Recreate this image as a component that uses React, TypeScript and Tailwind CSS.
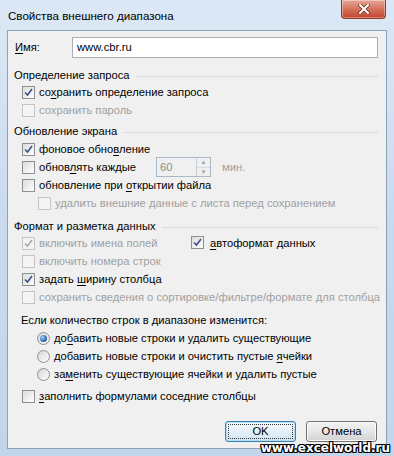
import type { ReactNode } from "react";

function Check({ checked = false, disabled = false }: { checked?: boolean; disabled?: boolean }) {
  return (
    <span
      className={`relative flex h-[13px] w-[13px] shrink-0 items-center justify-center border ${
        disabled ? "border-[#c4c4c4] bg-[#f4f4f4]" : "border-[#8e8f8f] bg-gradient-to-br from-[#dcdcdc] to-[#ffffff]"
      }`}
    >
      {checked && (
        <svg width="9" height="9" viewBox="0 0 9 9">
          <path
            d="M1 4.5 L3.5 7 L8 1"
            fill="none"
            stroke={disabled ? "#a8a8a8" : "#3c4f8a"}
            strokeWidth="1.6"
          />
        </svg>
      )}
    </span>
  );
}

function Radio({ checked = false }: { checked?: boolean }) {
  return (
    <span className="flex h-[13px] w-[13px] shrink-0 items-center justify-center rounded-full border border-[#8e8f8f] bg-gradient-to-br from-[#d8d8d8] to-[#fcfcfc]">
      {checked && (
        <span className="h-[7px] w-[7px] rounded-full bg-[radial-gradient(circle_at_35%_35%,#a6d3f5,#2a6cb0_60%,#1a4e86)]" />
      )}
    </span>
  );
}

function Row({
  children,
  checked,
  disabled,
  indent = "pl-[14px]",
}: {
  children: ReactNode;
  checked?: boolean;
  disabled?: boolean;
  indent?: string;
}) {
  return (
    <div className={`flex h-[18px] items-center gap-[3px] whitespace-nowrap ${indent}`}>
      <Check checked={checked} disabled={disabled} />
      <span className={`pl-[1px] ${disabled ? "text-[#a0a0a0]" : "text-black"}`}>{children}</span>
    </div>
  );
}

function Header({ children, mt }: { children: ReactNode; mt: string }) {
  return (
    <div className={`flex h-[16px] items-center gap-[6px] whitespace-nowrap pl-[6px] pr-[8px] ${mt}`}>
      <span className="shrink-0">{children}</span>
      <span className="mt-[3px] h-px flex-1 bg-[#dcdcdc]" />
    </div>
  );
}

function Option({ children, checked }: { children: ReactNode; checked?: boolean }) {
  return (
    <div className="flex h-[18px] items-center gap-[4px] whitespace-nowrap pl-[29px]">
      <Radio checked={checked} />
      <span>{children}</span>
    </div>
  );
}

export default function App() {
  return (
    <div
      className="relative flex h-[456px] w-[394px] flex-col overflow-hidden bg-gradient-to-b from-[#dce8f5] via-[#c9daee] to-[#c3d5ea] text-[11.2px] text-black"
      style={{ fontFamily: '"Liberation Sans", Arial, sans-serif' }}
    >
      <div className="flex h-[30px] shrink-0 items-start justify-between pl-[8px] pr-[8px]">
        <span className="mt-[7px] text-[11.6px] text-black">Свойства внешнего диапазона</span>
        <button className="flex h-[19px] w-[45px] items-center justify-center rounded-b-[4px] border border-t-0 border-[#8a3b2b] bg-gradient-to-b from-[#e8a697] via-[#d4735d] to-[#c2402a] shadow-[inset_0_0_0_1px_rgba(255,255,255,0.35)]">
          <svg width="12" height="10" viewBox="0 0 12 10">
            <path d="M2 1 L10 9 M10 1 L2 9" stroke="#6b2a1e" strokeWidth="3.4" strokeLinecap="square" />
            <path d="M2 1 L10 9 M10 1 L2 9" stroke="#ffffff" strokeWidth="2" strokeLinecap="square" />
          </svg>
        </button>
      </div>

      <div className="mx-[7px] mb-[7px] flex flex-1 flex-col border border-[#8ca1bb] bg-[#f0f0f0] pt-[6px]">
        <div className="flex h-[21px] items-center pl-[7px] pr-[8px]">
          <span className="w-[57px]">
            <span className="underline underline-offset-2">И</span>мя:
          </span>
          <div className="flex h-[21px] flex-1 items-center border border-[#abadb3] bg-white pl-[4px]">
            www.cbr.ru
          </div>
        </div>

        <Header mt="mt-[9px]">Определение запроса</Header>
        <Row checked>
          со<span className="underline underline-offset-2">х</span>ранить определение запроса
        </Row>
        <Row disabled>сохранить пароль</Row>

        <Header mt="mt-[4px]">Обновление экрана</Header>
        <div className="mt-px" />
        <Row checked>
          фоновое обно<span className="underline underline-offset-2">в</span>ление
        </Row>
        <div className="flex h-[18px] items-center gap-[3px] whitespace-nowrap pl-[14px]">
          <Check />
          <span className="w-[115px] pl-[1px]">
            обнов<span className="underline underline-offset-2">л</span>ять каждые
          </span>
          <div className="flex h-[20px] w-[55px] items-stretch border border-[#a9b8cb] bg-[#f0f0f0]">
            <span className="flex flex-1 items-center pl-[3px] text-[#8d8d8d]">60</span>
            <div className="flex w-[14px] flex-col border-l border-[#c8ced6]">
              <span className="flex flex-1 items-center justify-center border-b border-[#d6dbe1] text-[6px] leading-none text-[#9aa3ad]">
                ▲
              </span>
              <span className="flex flex-1 items-center justify-center text-[6px] leading-none text-[#9aa3ad]">▼</span>
            </div>
          </div>
          <span className="ml-[8px] text-[#a0a0a0]">мин.</span>
        </div>
        <Row>
          обновление при <span className="underline underline-offset-2">о</span>ткрытии файла
        </Row>
        <Row disabled indent="pl-[30px]">
          удалить внешние данные с листа перед сохранением
        </Row>

        <Header mt="mt-[6px]">Формат и разметка данных</Header>
        <div className="flex h-[18px] items-center">
          <div className="w-[183px]">
            <Row checked disabled>
              включить имена полей
            </Row>
          </div>
          <div className="flex items-center gap-[6px] whitespace-nowrap">
            <Check checked />
            <span>
              <span className="underline underline-offset-2">а</span>втоформат данных
            </span>
          </div>
        </div>
        <Row disabled>включить номера строк</Row>
        <Row checked>
          задать <span className="underline underline-offset-2">ш</span>ирину столбца
        </Row>
        <Row disabled>сохранить сведения о сортировке/фильтре/формате для столбца</Row>

        <div className="mt-[6px] flex h-[16px] items-center whitespace-nowrap pl-[13px]">
          Если количество строк в диапазоне изменится:
        </div>
        <div className="mt-px" />
        <Option checked>
          до<span className="underline underline-offset-2">б</span>авить новые строки и удалить существующие
        </Option>
        <Option>
          добавить новые строки и очистить пустые <span className="underline underline-offset-2">я</span>чейки
        </Option>
        <Option>
          за<span className="underline underline-offset-2">м</span>енить существующие ячейки и удалить пустые
        </Option>

        <div className="mt-[4px]">
          <Row>
            <span className="underline underline-offset-2">з</span>аполнить формулами соседние столбцы
          </Row>
        </div>

        <div className="mt-[16px] flex justify-end gap-[10px] pr-[9px]">
          <button className="flex h-[21px] w-[71px] items-center justify-center rounded-[3px] border border-[#3c7fb1] bg-gradient-to-b from-[#f4f9fd] via-[#e4eff8] to-[#cfe3f2] p-[2px] shadow-[inset_0_0_0_1px_#b3dcf5]">
            <span className="flex h-full w-full items-center justify-center border border-dotted border-[#333]">OK</span>
          </button>
          <button className="flex h-[21px] w-[71px] items-center justify-center rounded-[3px] border border-[#707070] bg-gradient-to-b from-[#f2f2f2] via-[#e6e6e6] to-[#d2d2d2] shadow-[inset_0_0_0_1px_#fcfcfc]">
            Отмена
          </button>
        </div>
      </div>

      <span
        className="absolute bottom-[2px] right-[4px] text-[12px] font-black leading-none text-white [text-shadow:1px_0_0_#000,-1px_0_0_#000,0_1px_0_#000,0_-1px_0_#000,1px_1px_0_#000,-1px_-1px_0_#000,1px_-1px_0_#000,-1px_1px_0_#000]"
        style={{ fontFamily: '"DejaVu Sans", sans-serif' }}
      >
        www.excelworld.ru
      </span>
    </div>
  );
}
